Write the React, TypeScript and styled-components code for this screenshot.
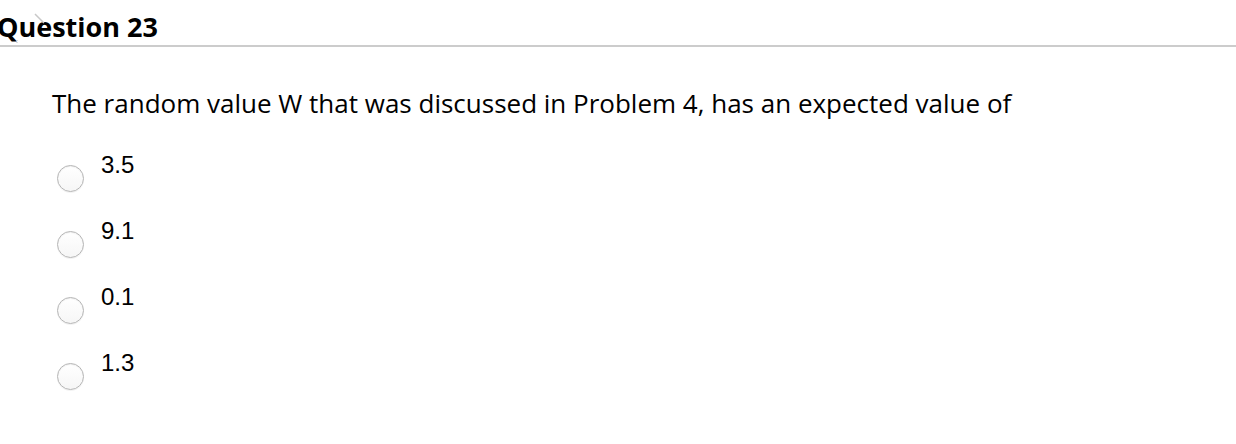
import React from "react";
import styled, { createGlobalStyle } from "styled-components";

const Global = createGlobalStyle`
  html, body { margin: 0; padding: 0; background: #fff; }
  body { width: 1236px; height: 444px; overflow: hidden; }
`;

const Page = styled.div`
  display: flex;
  flex-direction: column;
  width: 1236px;
`;

const Header = styled.div`
  position: relative;
  height: 45px;
  border-bottom: 2px solid #cccccc;
  display: flex;
  align-items: flex-end;
`;

const Title = styled.h2`
  margin: 0 0 0 -3px;
  font-family: "Open Sans", sans-serif;
  font-weight: 700;
  font-size: 27px;
  line-height: 36px;
  color: #000;
`;

const CursorMark = styled.svg`
  position: absolute;
  left: 14px;
  top: 10px;
  pointer-events: none;
`;

const Body = styled.div`
  padding: 38px 0 0 52px;
  display: flex;
  flex-direction: column;
`;

const Prompt = styled.p`
  margin: 0;
  font-family: "Open Sans", sans-serif;
  font-size: 26px;
  line-height: 36px;
  color: #000;
`;

const Options = styled.div`
  display: flex;
  flex-direction: column;
  margin-top: 30px;
`;

const Option = styled.label`
  display: flex;
  align-items: flex-start;
  gap: 17px;
  height: 66px;
`;

const Radio = styled.span`
  box-sizing: border-box;
  width: 27px;
  height: 27px;
  margin-top: 14px;
  margin-left: 5px;
  border-radius: 50%;
  border: 1px solid #b5b5b5;
  background: linear-gradient(#ffffff, #f6f6f6);
  box-shadow: inset 0 1px 1px rgba(0, 0, 0, 0.06), 0 1px 0 rgba(0, 0, 0, 0.05);
  flex-shrink: 0;
`;

const OptionText = styled.span`
  font-family: "Liberation Sans", Arial, sans-serif;
  font-size: 24px;
  line-height: 28px;
  color: #000;
`;

const options = ["3.5", "9.1", "0.1", "1.3"];

export default function App() {
  return (
    <>
      <Global />
      <Page>
        <Header>
          <Title>Question 23</Title>
          <CursorMark width="36" height="36" viewBox="0 0 36 36">
            <line x1="21" y1="4" x2="30" y2="13" stroke="#c8c8c8" strokeWidth="1.5" />
            <line x1="3" y1="30" x2="3" y2="34" stroke="#bbbbbb" strokeWidth="1" strokeDasharray="1 1" />
          </CursorMark>
        </Header>
        <Body>
          <Prompt>
            The random value W that was discussed in Problem 4, has an expected value of
          </Prompt>
          <Options>
            {options.map((o) => (
              <Option key={o}>
                <Radio />
                <OptionText>{o}</OptionText>
              </Option>
            ))}
          </Options>
        </Body>
      </Page>
    </>
  );
}
